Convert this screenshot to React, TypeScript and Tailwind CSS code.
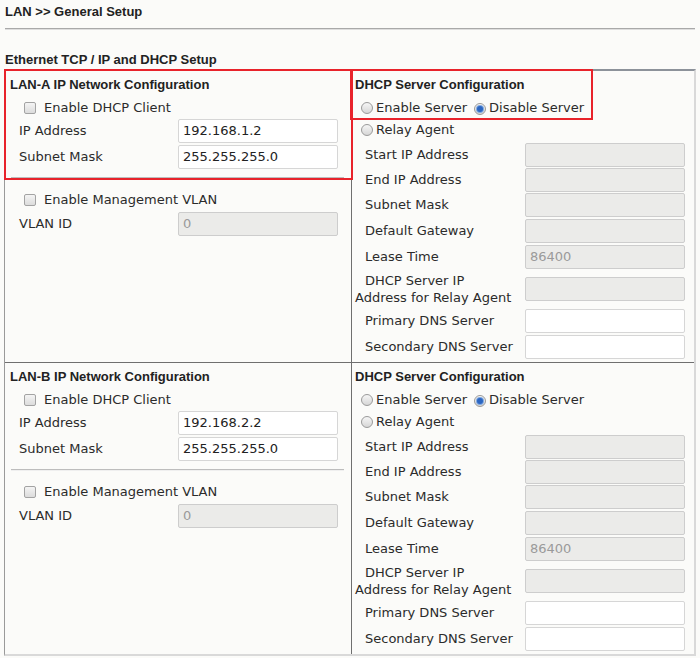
import React from "react"

const font = { fontFamily: '"DejaVu Sans", Verdana, sans-serif' }
const boldFont = { fontFamily: '"Liberation Sans", Arial, sans-serif' }

function CheckBox() {
  return (
    <span className="inline-block h-[12px] w-[12px] shrink-0 rounded-[2px] border border-[#a3a3a3] bg-gradient-to-b from-[#f4f4f4] to-[#dcdcdc]" />
  )
}

function Radio({ checked }: { checked?: boolean }) {
  return (
    <span className="inline-flex h-[12px] w-[12px] shrink-0 items-center justify-center rounded-full border border-[#9a9a9a] bg-gradient-to-b from-[#f6f6f6] to-[#d6d6d6]">
      {checked && <span className="h-[6px] w-[6px] rounded-full bg-[#2b66c2] ring-1 ring-[#7fa8e0]" />}
    </span>
  )
}

function Input({ value = "", disabled }: { value?: string; disabled?: boolean }) {
  return (
    <div
      className={
        "flex h-[24px] items-center rounded-[2px] border px-[4px] text-[13px] " +
        (disabled
          ? "border-[#cdcdcd] bg-[#ebebe9] text-[#9a9a9a]"
          : "border-[#d6d6d6] bg-white text-[#222]")
      }
    >
      {value}
    </div>
  )
}

function Heading({ children, pl }: { children: React.ReactNode; pl: string }) {
  return (
    <div className={`flex h-[26px] items-center pt-[1px] text-[13px] font-bold text-[#222] ${pl}`} style={boldFont}>
      {children}
    </div>
  )
}

function LanColumn({ name, ip }: { name: string; ip: string }) {
  return (
    <div className="flex flex-col border-r border-[#6f6f6f] pr-[8px]">
      <Heading pl="pl-[5px]">{name}</Heading>
      <div className="flex h-[21px] items-center gap-[8px] pl-[19px]">
        <CheckBox />
        <span>Enable DHCP Client</span>
      </div>
      <div className="flex h-[26px] items-center pl-[14px]">
        <span className="w-[159px]">IP Address</span>
        <div className="w-[160px]">
          <Input value={ip} />
        </div>
      </div>
      <div className="flex h-[26px] items-center pl-[14px]">
        <span className="w-[159px]">Subnet Mask</span>
        <div className="w-[160px]">
          <Input value="255.255.255.0" />
        </div>
      </div>
      <div className="mt-[7px] ml-[6px] mr-[-1px] h-[2px] border-t border-b border-t-[#bdbdbd] border-b-[#efefef]" />
      <div className="mt-[9px] flex h-[24px] items-center gap-[8px] pl-[19px]">
        <CheckBox />
        <span>Enable Management VLAN</span>
      </div>
      <div className="flex h-[23px] items-center pl-[14px]">
        <span className="w-[159px]">VLAN ID</span>
        <div className="w-[160px]">
          <Input value="0" disabled />
        </div>
      </div>
    </div>
  )
}

function Row({ label, value, disabled, h = "h-[26px]" }: { label: React.ReactNode; value?: string; disabled?: boolean; h?: string }) {
  return (
    <div className={`flex items-center ${h}`}>
      <div className="w-[170px] pl-[10px]">{label}</div>
      <div className="w-[160px]">
        <Input value={value} disabled={disabled} />
      </div>
    </div>
  )
}

function DhcpColumn() {
  return (
    <div className="flex flex-col pl-[3px]">
      <Heading pl="pl-0">DHCP Server Configuration</Heading>
      <div className="flex h-[21px] items-center pl-[6px]">
        <Radio />
        <span className="ml-[3px]">Enable Server</span>
        <span className="ml-[7px]">
          <Radio checked />
        </span>
        <span className="ml-[3px]">Disable Server</span>
      </div>
      <div className="flex h-[24px] items-center pl-[6px]">
        <Radio />
        <span className="ml-[3px]">Relay Agent</span>
      </div>
      <Row label="Start IP Address" disabled h="h-[25px]" />
      <Row label="End IP Address" disabled h="h-[25px]" />
      <Row label="Subnet Mask" disabled />
      <Row label="Default Gateway" disabled />
      <Row label="Lease Time" value="86400" disabled />
      <div className="flex h-[38px] items-center">
        <div className="w-[170px] leading-[17px]">
          <div className="pl-[10px]">DHCP Server IP</div>
          <div>Address for Relay Agent</div>
        </div>
        <div className="w-[160px]">
          <Input disabled />
        </div>
      </div>
      <Row label="Primary DNS Server" />
      <Row label="Secondary DNS Server" />
      <div className="h-[2px]" />
    </div>
  )
}

export default function App() {
  return (
    <div className="h-[658px] w-[700px] overflow-hidden bg-[#fbfbf9] text-[13px] text-[#2b2b2b]" style={font}>
      <div className="px-[5px] pt-[4px] text-[13px] font-bold leading-[16px] text-[#222]" style={boldFont}>
        LAN &gt;&gt; General Setup
      </div>
      <div className="mx-[5px] mt-[8px] h-[2px] border-t border-b border-t-[#a9a9a9] border-b-[#dedede]" />
      <div className="mt-[22px] px-[5px] text-[13px] font-bold leading-[16px] text-[#222]" style={boldFont}>
        Ethernet TCP / IP and DHCP Setup
      </div>
      <div className="relative mx-[4px] mt-[1px] w-[692px] border-t-2 border-r-2 border-b-2 border-l border-t-[#8c929a] border-r-[#d9d9d9] border-b-[#d9d9d9] border-l-[#9a9a9a]">
        <div className="grid grid-cols-[347px_1fr]">
          <LanColumn name="LAN-A IP Network Configuration" ip="192.168.1.2" />
          <DhcpColumn />
        </div>
        <div className="grid grid-cols-[347px_1fr] border-t border-[#6f6f6f]">
          <LanColumn name="LAN-B IP Network Configuration" ip="192.168.2.2" />
          <DhcpColumn />
        </div>
        <div className="pointer-events-none absolute left-[-1px] top-[-2px] h-[111px] w-[349px] border-2 border-[#e8232b]" />
        <div className="pointer-events-none absolute left-[345px] top-[-2px] h-[51px] w-[243px] border-2 border-[#e8232b]" />
      </div>
    </div>
  )
}
